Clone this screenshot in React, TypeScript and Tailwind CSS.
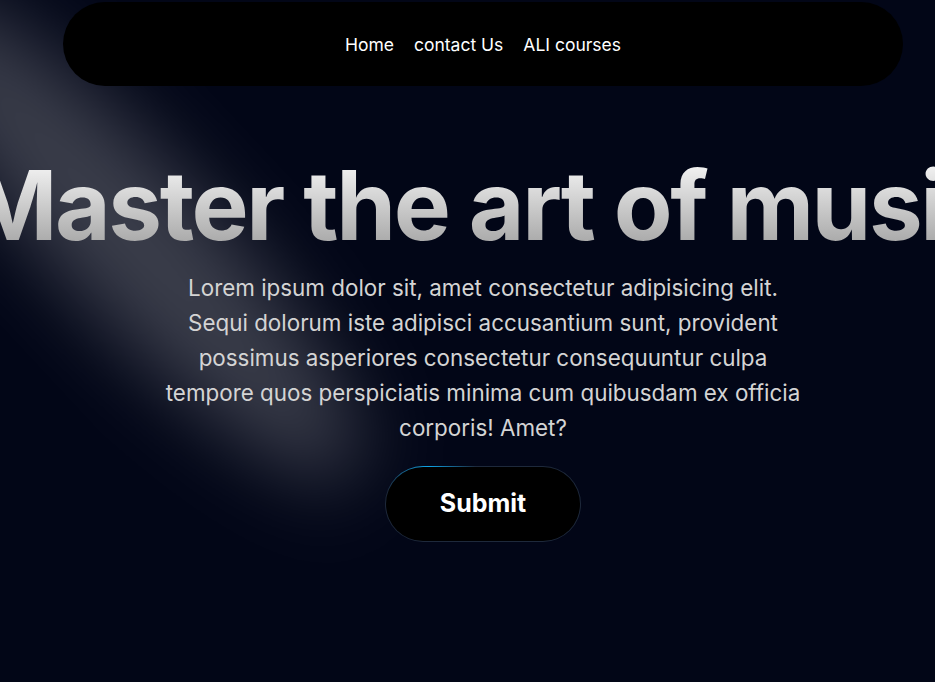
import React from 'react';

const font = { fontFamily: 'Inter, "Noto Sans", sans-serif' };

function Spotlight() {
    return (
        <svg
            className="pointer-events-none absolute inset-0 h-full w-full"
            viewBox="0 0 935 682"
            fill="none"
            preserveAspectRatio="none"
        >
            <defs>
                <filter id="glow" x="-50%" y="-50%" width="200%" height="200%">
                    <feGaussianBlur stdDeviation="40" />
                </filter>
            </defs>
            <ellipse
                cx="130"
                cy="235"
                rx="330"
                ry="78"
                transform="rotate(47 130 235)"
                fill="white"
                fillOpacity="0.22"
                filter="url(#glow)"
            />
        </svg>
    );
}

export default function App() {
    return (
        <div className="relative min-h-screen w-full overflow-hidden bg-[#020617]" style={font}>
            <Spotlight />

            <div className="relative z-10 flex flex-col items-center pl-[31px] pt-[2px]">
                {/* Nav */}
                <nav className="flex h-[84px] w-[840px] items-center justify-center gap-5 rounded-full bg-black pt-[2px] text-[17.5px] text-white">
                    <a href="#">Home</a>
                    <a href="#">contact Us</a>
                    <a href="#">ALI courses</a>
                </nav>

                {/* Hero */}
                <h1 className="mt-[71px] whitespace-nowrap bg-gradient-to-b from-neutral-50 to-neutral-400 bg-clip-text text-[96px] font-bold leading-[96px] tracking-[-0.025em] text-transparent">
                    Master the art of music
                </h1>

                <p className="mt-[17px] max-w-[640px] text-center text-[22.4px] leading-[35px] text-neutral-300">
                    Lorem ipsum dolor sit, amet consectetur adipisicing elit. Sequi dolorum iste adipisci
                    accusantium sunt, provident possimus asperiores consectetur consequuntur culpa tempore
                    quos perspiciatis minima cum quibusdam ex officia corporis! Amet?
                </p>

                {/* Submit with moving border look */}
                <div className="relative mt-[21px] h-[76px] w-[196px] overflow-hidden rounded-full bg-[#1e293b] p-px">
                    <div className="absolute inset-0 bg-[radial-gradient(circle_at_22%_0%,#0ea5e9_0,transparent_28%)]" />
                    <button className="relative flex h-full w-full items-center justify-center rounded-full bg-black text-[25px] font-bold text-white">
                        Submit
                    </button>
                </div>
            </div>
        </div>
    );
}
